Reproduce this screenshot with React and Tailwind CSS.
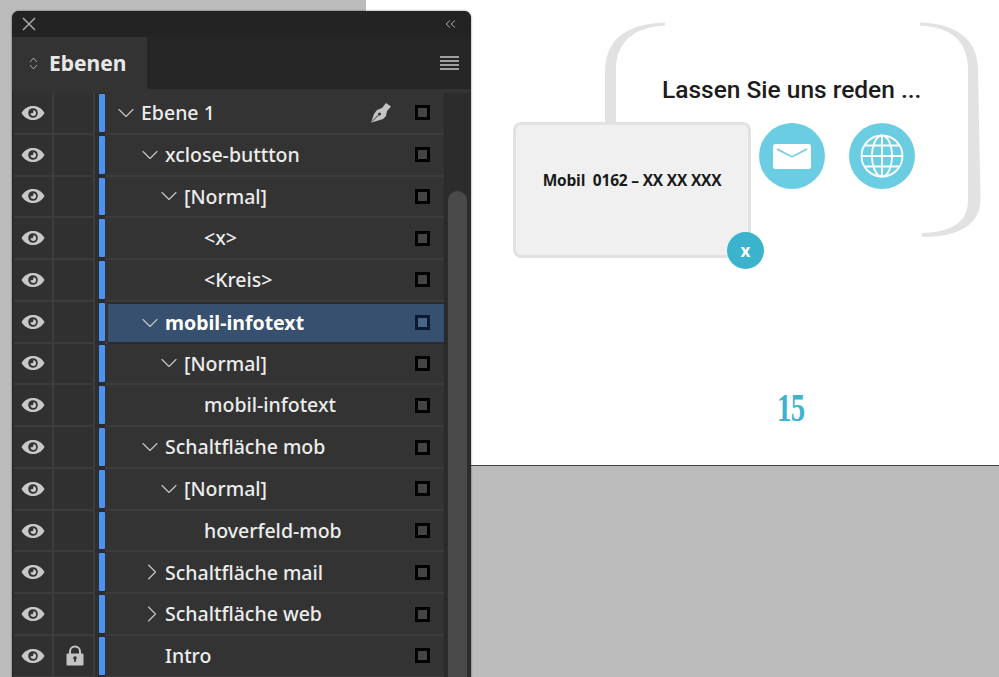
import React from 'react'
import { ChevronDown, ChevronRight } from 'lucide-react'

const layers = [
  { name: 'Ebene 1', indent: 0, arrow: 'down', pen: true },
  { name: 'xclose-buttton', indent: 1, arrow: 'down' },
  { name: '[Normal]', indent: 2, arrow: 'down' },
  { name: '<x>', indent: 3 },
  { name: '<Kreis>', indent: 3 },
  { name: 'mobil-infotext', indent: 1, arrow: 'down', selected: true },
  { name: '[Normal]', indent: 2, arrow: 'down' },
  { name: 'mobil-infotext', indent: 3 },
  { name: 'Schaltfläche mob', indent: 1, arrow: 'down' },
  { name: '[Normal]', indent: 2, arrow: 'down' },
  { name: 'hoverfeld-mob', indent: 3 },
  { name: 'Schaltfläche mail', indent: 1, arrow: 'right' },
  { name: 'Schaltfläche web', indent: 1, arrow: 'right' },
  { name: 'Intro', indent: 1, locked: true },
]

const indentClass = ['pl-[8px]', 'pl-[32px]', 'pl-[51px]', 'pl-[71px]']

const Eye = () => (
  <svg width="24" height="16" viewBox="0 0 24 16">
    <path d="M0.500 8C4 2.500 8 1 12 1S20 2.500 23.500 8C20 13.500 16 15 12 15S4 13.500 0.500 8Z" fill="#c8c8c8" />
    <circle cx="12" cy="8" r="4.800" fill="#333" />
    <path d="M12.500 5.200A2.900 2.900 0 1 1 9.300 8.500L12 8Z" fill="#c8c8c8" />
  </svg>
)

const Lock = () => (
  <svg width="18" height="21" viewBox="0 0 18 21">
    <path d="M4 9V6.500a5 5 0 0 1 10 0V9" fill="none" stroke="#c4c4c4" strokeWidth="2" />
    <rect x="0.500" y="8.500" width="17" height="12" rx="1" fill="#c4c4c4" />
    <circle cx="9" cy="13" r="1.800" fill="#333" />
    <rect x="8.200" y="13" width="1.600" height="4" fill="#333" />
  </svg>
)

const Pen = () => (
  <svg width="20" height="21" viewBox="0 0 20 21">
    <path d="M0 20.500L3 12L6 8L11 6L15 1L20 4.500L16 9L15 14L12 17L4 19.500Z" fill="#c4c4c4" />
    <path d="M1 19.500L8 12.500" stroke="#333" strokeWidth="1" />
    <circle cx="8.500" cy="12" r="1.500" fill="#333" />
  </svg>
)

const Row = ({ layer }) => (
  <div className="flex h-[41.77px] shrink-0 items-stretch">
    <div className="flex w-[40px] items-center justify-center border-r-2 border-b-2 border-[#3c3c3c] bg-[#303030]">
      <Eye />
    </div>
    <div className="flex w-[41px] items-center justify-center border-r-2 border-b-2 border-[#3c3c3c] bg-[#303030] pl-[2px]">
      {layer.locked && <Lock />}
    </div>
    <div className="w-[4px] border-b-2 border-[#2c2c2c] bg-[#2f2f2f]" />
    <div className="flex w-[6px] border-b-2 border-[#2c2c2c] bg-[#2a2a2a] py-[1px]">
      <div className="w-full rounded-[1px] bg-[#4b92f5]" />
    </div>
    <div className="w-[3px] border-b-2 border-[#3c3c3c] bg-[#333333]" />
    <div
      className={`flex w-[336px] items-center pr-[14px] ${indentClass[layer.indent]} ${
        layer.selected ? 'border-y-2 border-[#2b2b2b] bg-[#37506f]' : 'border-b-2 border-[#3c3c3c] bg-[#333333]'
      }`}
    >
      <span className="flex w-[19px] shrink-0 justify-center text-[#c4c4c4]">
        {layer.arrow === 'down' && <ChevronDown size={28} strokeWidth={1} className="shrink-0" />}
        {layer.arrow === 'right' && <ChevronRight size={28} strokeWidth={1} className="ml-[4px] shrink-0" />}
      </span>
      <span
        className={`ml-[6px] whitespace-nowrap text-[19.5px] leading-none ${
          layer.selected ? 'font-bold text-white' : 'font-medium text-[#ececec]'
        }`}
      >
        {layer.name}
      </span>
      <span className="ml-auto flex items-center gap-[24px]">
        {layer.pen && <Pen />}
        <span className={`block h-[15px] w-[15px] border-[3px] ${layer.selected ? 'border-[#0c1a33] bg-[#4a6585]' : 'border-black bg-[#444444]'}`} />
      </span>
    </div>
  </div>
)

const LayersPanel = () => (
  <div className="absolute left-[12px] top-[11px] flex h-[680px] w-[459px] flex-col overflow-hidden rounded-t-[7px] bg-[#2a2a2a] font-['Noto_Sans',sans-serif] shadow-[0_0_2px_rgba(0,0,0,0.6)]">
    <div className="flex h-[26px] shrink-0 items-center justify-between bg-[#232323] pl-[10px] pr-[15px]">
      <svg width="14" height="14" viewBox="0 0 14 14" stroke="#a8a8a8" strokeWidth="1.500">
        <path d="M1 1L13 13M13 1L1 13" />
      </svg>
      <svg width="11" height="8" viewBox="0 0 11 8" fill="none" stroke="#a8a8a8" strokeWidth="1">
        <path d="M5 0.500L1 4L5 7.500M10 0.500L6 4L10 7.500" />
      </svg>
    </div>
    <div className="flex h-[52px] shrink-0 items-stretch justify-between bg-[#262626] pr-[12px]">
      <div className="flex w-[135px] items-center bg-[#333333] pl-[17px]">
        <svg width="9" height="13" viewBox="0 0 9 13" fill="none" stroke="#a8a8a8" strokeWidth="1">
          <path d="M1 5L4.500 1L8 5M1 8L4.500 12L8 8" />
        </svg>
        <span className="ml-[11px] text-[21px] font-bold leading-none text-[#e8e8e8]">Ebenen</span>
      </div>
      <div className="flex flex-col justify-center gap-[2px]">
        <span className="block h-[2px] w-[19px] bg-[#a0a0a0]" />
        <span className="block h-[2px] w-[19px] bg-[#a0a0a0]" />
        <span className="block h-[2px] w-[19px] bg-[#a0a0a0]" />
        <span className="block h-[2px] w-[19px] bg-[#a0a0a0]" />
      </div>
    </div>
    <div className="flex min-h-0 flex-1 border-t-[4px] border-[#333333] pl-[2px]">
      <div className="flex w-[432px] shrink-0 flex-col">
        {layers.map((layer, i) => (
          <Row key={i} layer={layer} />
        ))}
      </div>
      <div className="flex flex-1 flex-col bg-[#2c2c2c] pl-[2px] pr-[4px] pt-[98px]">
        <div className="flex-1 rounded-t-full bg-[#4a4a4a]" />
      </div>
    </div>
  </div>
)

const PageContent = () => (
  <div className="absolute left-[366px] top-0 h-[466px] w-[633px] border-b border-[#444444] bg-white">
    {/* brackets, coords relative to the page */}
    <svg className="absolute left-0 top-0" width="633" height="300" viewBox="366 0 633 300">
      <path d="M665 22.500C625 24 605 40 605 72L605 124L616 124L616 70C616 42 634 27 665 25.500Z" fill="#e2e2e2" />
      <path d="M920 22.500C960 24 978 42 978 70L980.500 200C980 225 958 237 922 237L922 233C952 232 968 222 968 200L968 70C968 42 952 27 920 25.500Z" fill="#e2e2e2" />
    </svg>
    <div className="absolute left-[296px] top-[75px] whitespace-nowrap font-['Roboto',sans-serif] text-[24.5px] font-medium leading-[30px] text-[#1c1c1c]">
      Lassen Sie uns reden ...
    </div>
    <div className="absolute left-[147px] top-[122px] flex h-[136px] w-[238px] justify-center rounded-[8px] border-[3px] border-[#e2e2e2] bg-[#f0f0f0] pt-[45px]">
      <span className="whitespace-pre font-['Open_Sans',sans-serif] text-[15.5px] font-bold leading-[20px] tracking-[-0.2px] text-[#1a1a1a]">
        Mobil  0162 – XX XX XXX
      </span>
    </div>
    <div className="absolute left-[361px] top-[232px] flex h-[37px] w-[37px] items-center justify-center rounded-full bg-[#3cb3cc] font-['Open_Sans',sans-serif] text-[17px] font-bold leading-none text-white">
      x
    </div>
    <div className="absolute left-[393px] top-[123px] flex h-[66px] w-[66px] items-center justify-center rounded-full bg-[#6bcde2]">
      <svg width="38" height="25" viewBox="0 0 38 25">
        <rect width="38" height="25" rx="2.500" fill="white" />
        <path d="M4 5L19 13L34 5" fill="none" stroke="#6bcde2" strokeWidth="1.500" />
      </svg>
    </div>
    <div className="absolute left-[483px] top-[123px] flex h-[66px] w-[66px] items-center justify-center rounded-full bg-[#6bcde2]">
      <svg width="44" height="44" viewBox="0 0 44 44" fill="none" stroke="white" strokeWidth="1.800">
        <circle cx="22" cy="22" r="20.500" />
        <ellipse cx="22" cy="22" rx="10" ry="20.500" />
        <path d="M22 1.500V42.500M1.500 22H42.500M4.500 11.500H39.500M4.500 32.500H39.500" />
      </svg>
    </div>
    <div className="absolute left-[411px] top-[385px] origin-left scale-x-[0.72] font-['Liberation_Serif',serif] text-[40px] font-bold leading-[46px] tracking-[-1px] text-[#3fb3cc]">
      15
    </div>
  </div>
)

const App = () => {
  return (
    <div className="relative h-[677px] w-[999px] overflow-hidden bg-[#bcbcbc]">
      <PageContent />
      <LayersPanel />
    </div>
  )
}

export default App
